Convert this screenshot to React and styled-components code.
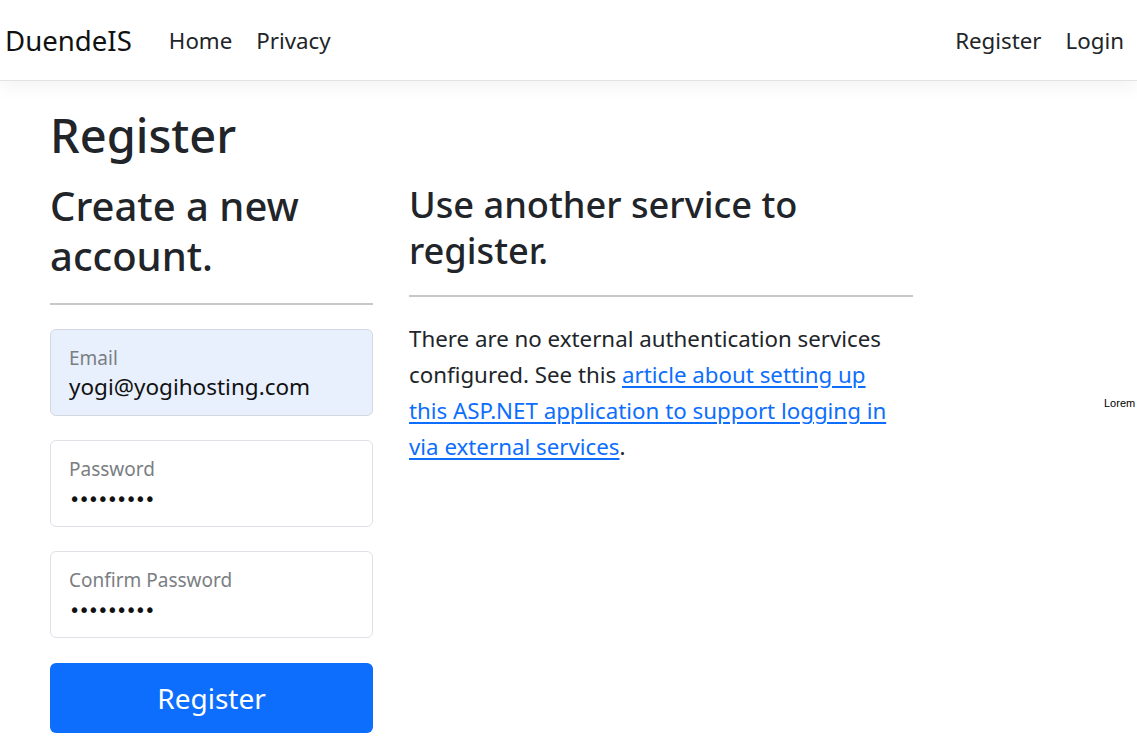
import React from 'react'
import styled, { createGlobalStyle } from 'styled-components'

const GlobalStyle = createGlobalStyle`
  html, body {
    margin: 0;
    padding: 0;
    background: #fff;
    overflow: hidden;
  }
  body {
    font-family: "Noto Sans", "Open Sans", sans-serif;
    color: #212529;
  }
  * {
    box-sizing: border-box;
  }
`

function App() {
    return (
        <>
        <GlobalStyle/>
        <Navbar>
            <Brand href="#">DuendeIS</Brand>
            <NavList>
                <NavLink href="#">Home</NavLink>
                <NavLink href="#">Privacy</NavLink>
            </NavList>
            <NavList>
                <NavLink href="#">Register</NavLink>
                <NavLink href="#">Login</NavLink>
            </NavList>
        </Navbar>

        <Main>
            <PageTitle>Register</PageTitle>
            <Row>
                <FormCol>
                    <FormTitle>Create a new account.</FormTitle>
                    <Rule/>
                    <Field autofilled>
                        <FieldLabel>Email</FieldLabel>
                        <FieldValue>yogi@yogihosting.com</FieldValue>
                    </Field>
                    <Field>
                        <FieldLabel>Password</FieldLabel>
                        <Dots>•••••••••</Dots>
                    </Field>
                    <Field>
                        <FieldLabel>Confirm Password</FieldLabel>
                        <Dots>•••••••••</Dots>
                    </Field>
                    <SubmitButton type="button">Register</SubmitButton>
                </FormCol>

                <ExternalCol>
                    <SectionTitle>Use another service to register.</SectionTitle>
                    <Rule/>
                    <Text>
                        There are no external authentication services configured. See this{' '}
                        <Link href="#">article about setting up this ASP.NET application to support logging in via external services</Link>.
                    </Text>
                </ExternalCol>

                <Aside>
                    <Lorem>Lorem</Lorem>
                </Aside>
            </Row>
        </Main>
        </>
    )
}

export default App

const Navbar = styled.nav`
    display: flex;
    align-items: center;
    height: 81px;
    padding: 0 0 0 5px;
    border-bottom: 1px solid #e3e3e3;
    box-shadow: 0 6px 18px rgba(0, 0, 0, 0.05);
`

const Brand = styled.a`
    font-size: 27.6px;
    color: #111;
    text-decoration: none;
    margin-right: 25px;
`

const NavList = styled.div`
    display: flex;
    align-items: center;
    &:first-of-type {
        flex: 1;
    }
    &:last-of-type {
        padding-right: 1px;
    }
`

const NavLink = styled.a`
    font-size: 22.3px;
    color: #212529;
    text-decoration: none;
    padding: 0 12px;
`

const Main = styled.main`
    padding: 24px 0 0 50px;
`

const PageTitle = styled.h1`
    font-size: 47px;
    font-weight: 500;
    line-height: 60px;
    margin: 0 0 16px;
`

const Row = styled.div`
    display: flex;
    align-items: flex-start;
    gap: 36px;
`

const FormCol = styled.div`
    width: 323px;
    flex-shrink: 0;
    display: flex;
    flex-direction: column;
`

const FormTitle = styled.h2`
    font-size: 40px;
    font-weight: 500;
    line-height: 50px;
    margin: 0;
`

const Rule = styled.hr`
    border: 0;
    border-top: 2px solid #c8c8c8;
    margin: 22px 0 24px;
    width: 100%;
`

const Field = styled.div`
    display: flex;
    flex-direction: column;
    height: 87px;
    padding: 16px 18px 0;
    margin-bottom: 24px;
    border: 1px solid ${p => (p.autofilled ? '#d3d8e0' : '#dee2e6')};
    border-radius: 6px;
    background: ${p => (p.autofilled ? '#e8f0fe' : '#fff')};
`

const FieldLabel = styled.span`
    font-size: 19px;
    line-height: 24px;
    color: #7a7e83;
`

const FieldValue = styled.span`
    font-size: 22.5px;
    line-height: 30px;
    margin-top: 2px;
    color: #111;
`

const Dots = styled.span`
    font-family: "DejaVu Sans", sans-serif;
    font-size: 19px;
    line-height: 30px;
    letter-spacing: -1.8px;
    margin-top: 3px;
    color: #111;
`

const SubmitButton = styled.button`
    height: 70px;
    margin-top: 1px;
    border: 0;
    border-radius: 6px;
    background: #0d6efd;
    color: #fff;
    font-family: inherit;
    font-size: 28px;
    cursor: pointer;
`

const ExternalCol = styled.div`
    width: 504px;
    flex-shrink: 0;
    display: flex;
    flex-direction: column;
`

const SectionTitle = styled.h3`
    font-size: 36.2px;
    font-weight: 500;
    line-height: 46px;
    margin: 0;
`

const Text = styled.p`
    max-width: 490px;
    font-size: 22.3px;
    line-height: 36px;
    margin: 0;
`

const Link = styled.a`
    color: #0d6efd;
    text-decoration: underline;
    text-underline-offset: 3px;
`

const Aside = styled.div`
    flex: 1;
    min-width: 0;
    display: flex;
    padding: 216px 0 0 155px;
`

const Lorem = styled.span`
    font-family: "Liberation Sans", Arial, sans-serif;
    font-size: 11px;
    line-height: 13px;
    color: #000;
    white-space: nowrap;
`
